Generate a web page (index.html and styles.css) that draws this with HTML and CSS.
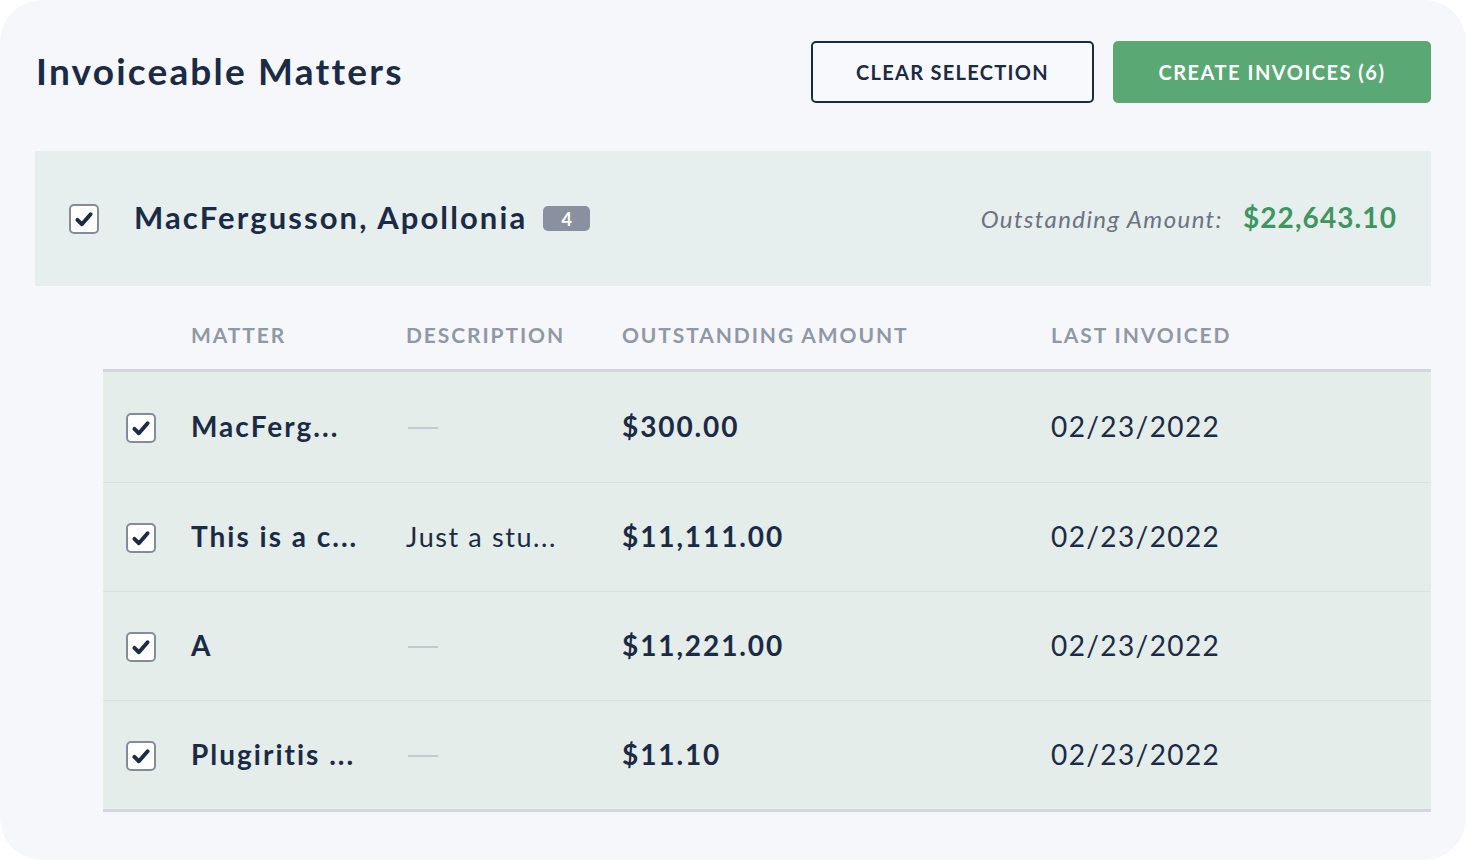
FILE: index.html
```html
<!DOCTYPE html>
<html>
<head>
<meta charset="utf-8">
<link rel="stylesheet" href="styles.css">
</head>
<body>
<div class="card">
  <header class="top">
    <h1 class="title">Invoiceable Matters</h1>
    <div class="actions">
      <button class="btn btn-outline">CLEAR SELECTION</button>
      <button class="btn btn-green">CREATE INVOICES (6)</button>
    </div>
  </header>

  <section class="client">
    <div class="client-left">
      <span class="cb cb-lg"><svg viewBox="0 0 16 16"><path d="M3.6 8.6 L6.6 11.5 L12.4 4.8" /></svg></span>
      <span class="client-name">MacFergusson, Apollonia</span>
      <span class="badge">4</span>
    </div>
    <div class="client-right">
      <span class="oa-label">Outstanding Amount:</span>
      <span class="oa-value">$22,643.10</span>
    </div>
  </section>

  <div class="table">
    <div class="thead">
      <span></span>
      <span>MATTER</span>
      <span>DESCRIPTION</span>
      <span>OUTSTANDING AMOUNT</span>
      <span>LAST INVOICED</span>
    </div>
    <div class="tbody">
      <div class="row">
        <span class="cell-cb"><span class="cb"><svg viewBox="0 0 16 16"><path d="M3.6 8.6 L6.6 11.5 L12.4 4.8" /></svg></span></span>
        <span class="matter">MacFerg...</span>
        <span class="desc"><span class="dash" aria-label="none"></span></span>
        <span class="amount">$300.00</span>
        <span class="date">02/23/2022</span>
      </div>
      <div class="row">
        <span class="cell-cb"><span class="cb"><svg viewBox="0 0 16 16"><path d="M3.6 8.6 L6.6 11.5 L12.4 4.8" /></svg></span></span>
        <span class="matter">This is a c...</span>
        <span class="desc">Just a stu...</span>
        <span class="amount">$11,111.00</span>
        <span class="date">02/23/2022</span>
      </div>
      <div class="row">
        <span class="cell-cb"><span class="cb"><svg viewBox="0 0 16 16"><path d="M3.6 8.6 L6.6 11.5 L12.4 4.8" /></svg></span></span>
        <span class="matter">A</span>
        <span class="desc"><span class="dash" aria-label="none"></span></span>
        <span class="amount">$11,221.00</span>
        <span class="date">02/23/2022</span>
      </div>
      <div class="row">
        <span class="cell-cb"><span class="cb"><svg viewBox="0 0 16 16"><path d="M3.6 8.6 L6.6 11.5 L12.4 4.8" /></svg></span></span>
        <span class="matter">Plugiritis ...</span>
        <span class="desc"><span class="dash" aria-label="none"></span></span>
        <span class="amount">$11.10</span>
        <span class="date">02/23/2022</span>
      </div>
    </div>
  </div>
</div>
</body>
</html>
```

FILE: styles.css
```css
* { box-sizing: border-box; }
html, body {
  margin: 0;
  padding: 0;
  background: #ffffff;
}
body {
  font-family: Lato, "Open Sans", "Liberation Sans", sans-serif;
  color: #1b2a45;
}
.card {
  width: 1466px;
  height: 860px;
  background: #f6f7fa;
  border-radius: 42px;
  padding: 41px 35px 0 35px;
  overflow: hidden;
}
.top {
  display: flex;
  align-items: center;
  justify-content: space-between;
  height: 62px;
}
.title {
  margin: -4px 0 0 1px;
  font-size: 37px;
  font-weight: 700;
  letter-spacing: 2.2px;
  color: #1b2a45;
}
.actions {
  display: flex;
  gap: 19px;
}
.btn {
  height: 62px;
  font-family: inherit;
  font-size: 20px;
  font-weight: 700;
  border-radius: 5px;
  cursor: pointer;
}
.btn-outline {
  width: 283px;
  background: #f8f9fc;
  border: 2px solid #1b2a45;
  color: #1b2a45;
  letter-spacing: 1.3px;
}
.btn-green {
  width: 318px;
  background: #5aa874;
  border: none;
  color: #ffffff;
  letter-spacing: 1.5px;
}
.client {
  margin-top: 48px;
  height: 135px;
  background: #e6efed;
  display: flex;
  align-items: center;
  justify-content: space-between;
  padding: 0 34px;
}
.client-left {
  display: flex;
  align-items: center;
}
.client-name { margin-top: -3px; }
.cb {
  width: 30px;
  height: 30px;
  border: 2px solid #858c98;
  border-radius: 5px;
  background: #ffffff;
  display: inline-flex;
  align-items: center;
  justify-content: center;
  flex: none;
}
.cb svg {
  width: 24px;
  height: 24px;
  fill: none;
  stroke: #1b2a45;
  stroke-width: 2.6;
  stroke-linecap: round;
  stroke-linejoin: round;
}
.cb-lg { margin-right: 35px; }
.client-name {
  font-size: 31px;
  font-weight: 700;
  letter-spacing: 2.1px;
}
.badge {
  margin-left: 16px;
  width: 47px;
  height: 25px;
  background: #8991a0;
  color: #ffffff;
  border-radius: 5px;
  font-size: 18px;
  font-weight: 700;
  display: inline-flex;
  align-items: center;
  justify-content: center;
}
.client-right {
  display: flex;
  align-items: baseline;
  gap: 20px;
  margin-top: -3px;
}
.oa-label {
  font-style: italic;
  font-size: 24px;
  color: #6b7282;
  letter-spacing: 1.4px;
}
.oa-value {
  font-size: 28px;
  font-weight: 700;
  color: #3f955f;
  letter-spacing: 1.1px;
}
.table {
  margin-left: 68px;
}
.thead, .row {
  display: grid;
  grid-template-columns: 88px 215px 216px 429px 1fr;
  align-items: center;
}
.thead {
  height: 86px;
  font-size: 21px;
  font-weight: 700;
  color: #9198a5;
  letter-spacing: 1.9px;
  border-bottom: 3px solid #d3d6dd;
  padding-top: 14px;
}
.tbody {
  background: #e4edea;
  border-bottom: 3px solid #d3d6dd;
}
.row {
  height: 109px;
  border-top: 1px solid #d9e2df;
}
.row:first-child { border-top: none; height: 110px; }
.cell-cb {
  padding-left: 23px;
  display: flex;
  margin-top: 2px;
}
.matter, .amount {
  font-size: 28px;
  font-weight: 700;
  letter-spacing: 2px;
  margin-top: -2px;
}
.amount { letter-spacing: 1.9px; }
.desc {
  font-size: 27px;
  letter-spacing: 1.6px;
  display: flex;
  align-items: center;
  margin-top: -2px;
}
.dash {
  display: inline-block;
  width: 30px;
  height: 2px;
  margin-left: 2px;
  margin-top: 4px;
  background: #c3cacd;
}
.date {
  font-size: 28px;
  letter-spacing: 1.4px;
  margin-top: -2px;
}
```
